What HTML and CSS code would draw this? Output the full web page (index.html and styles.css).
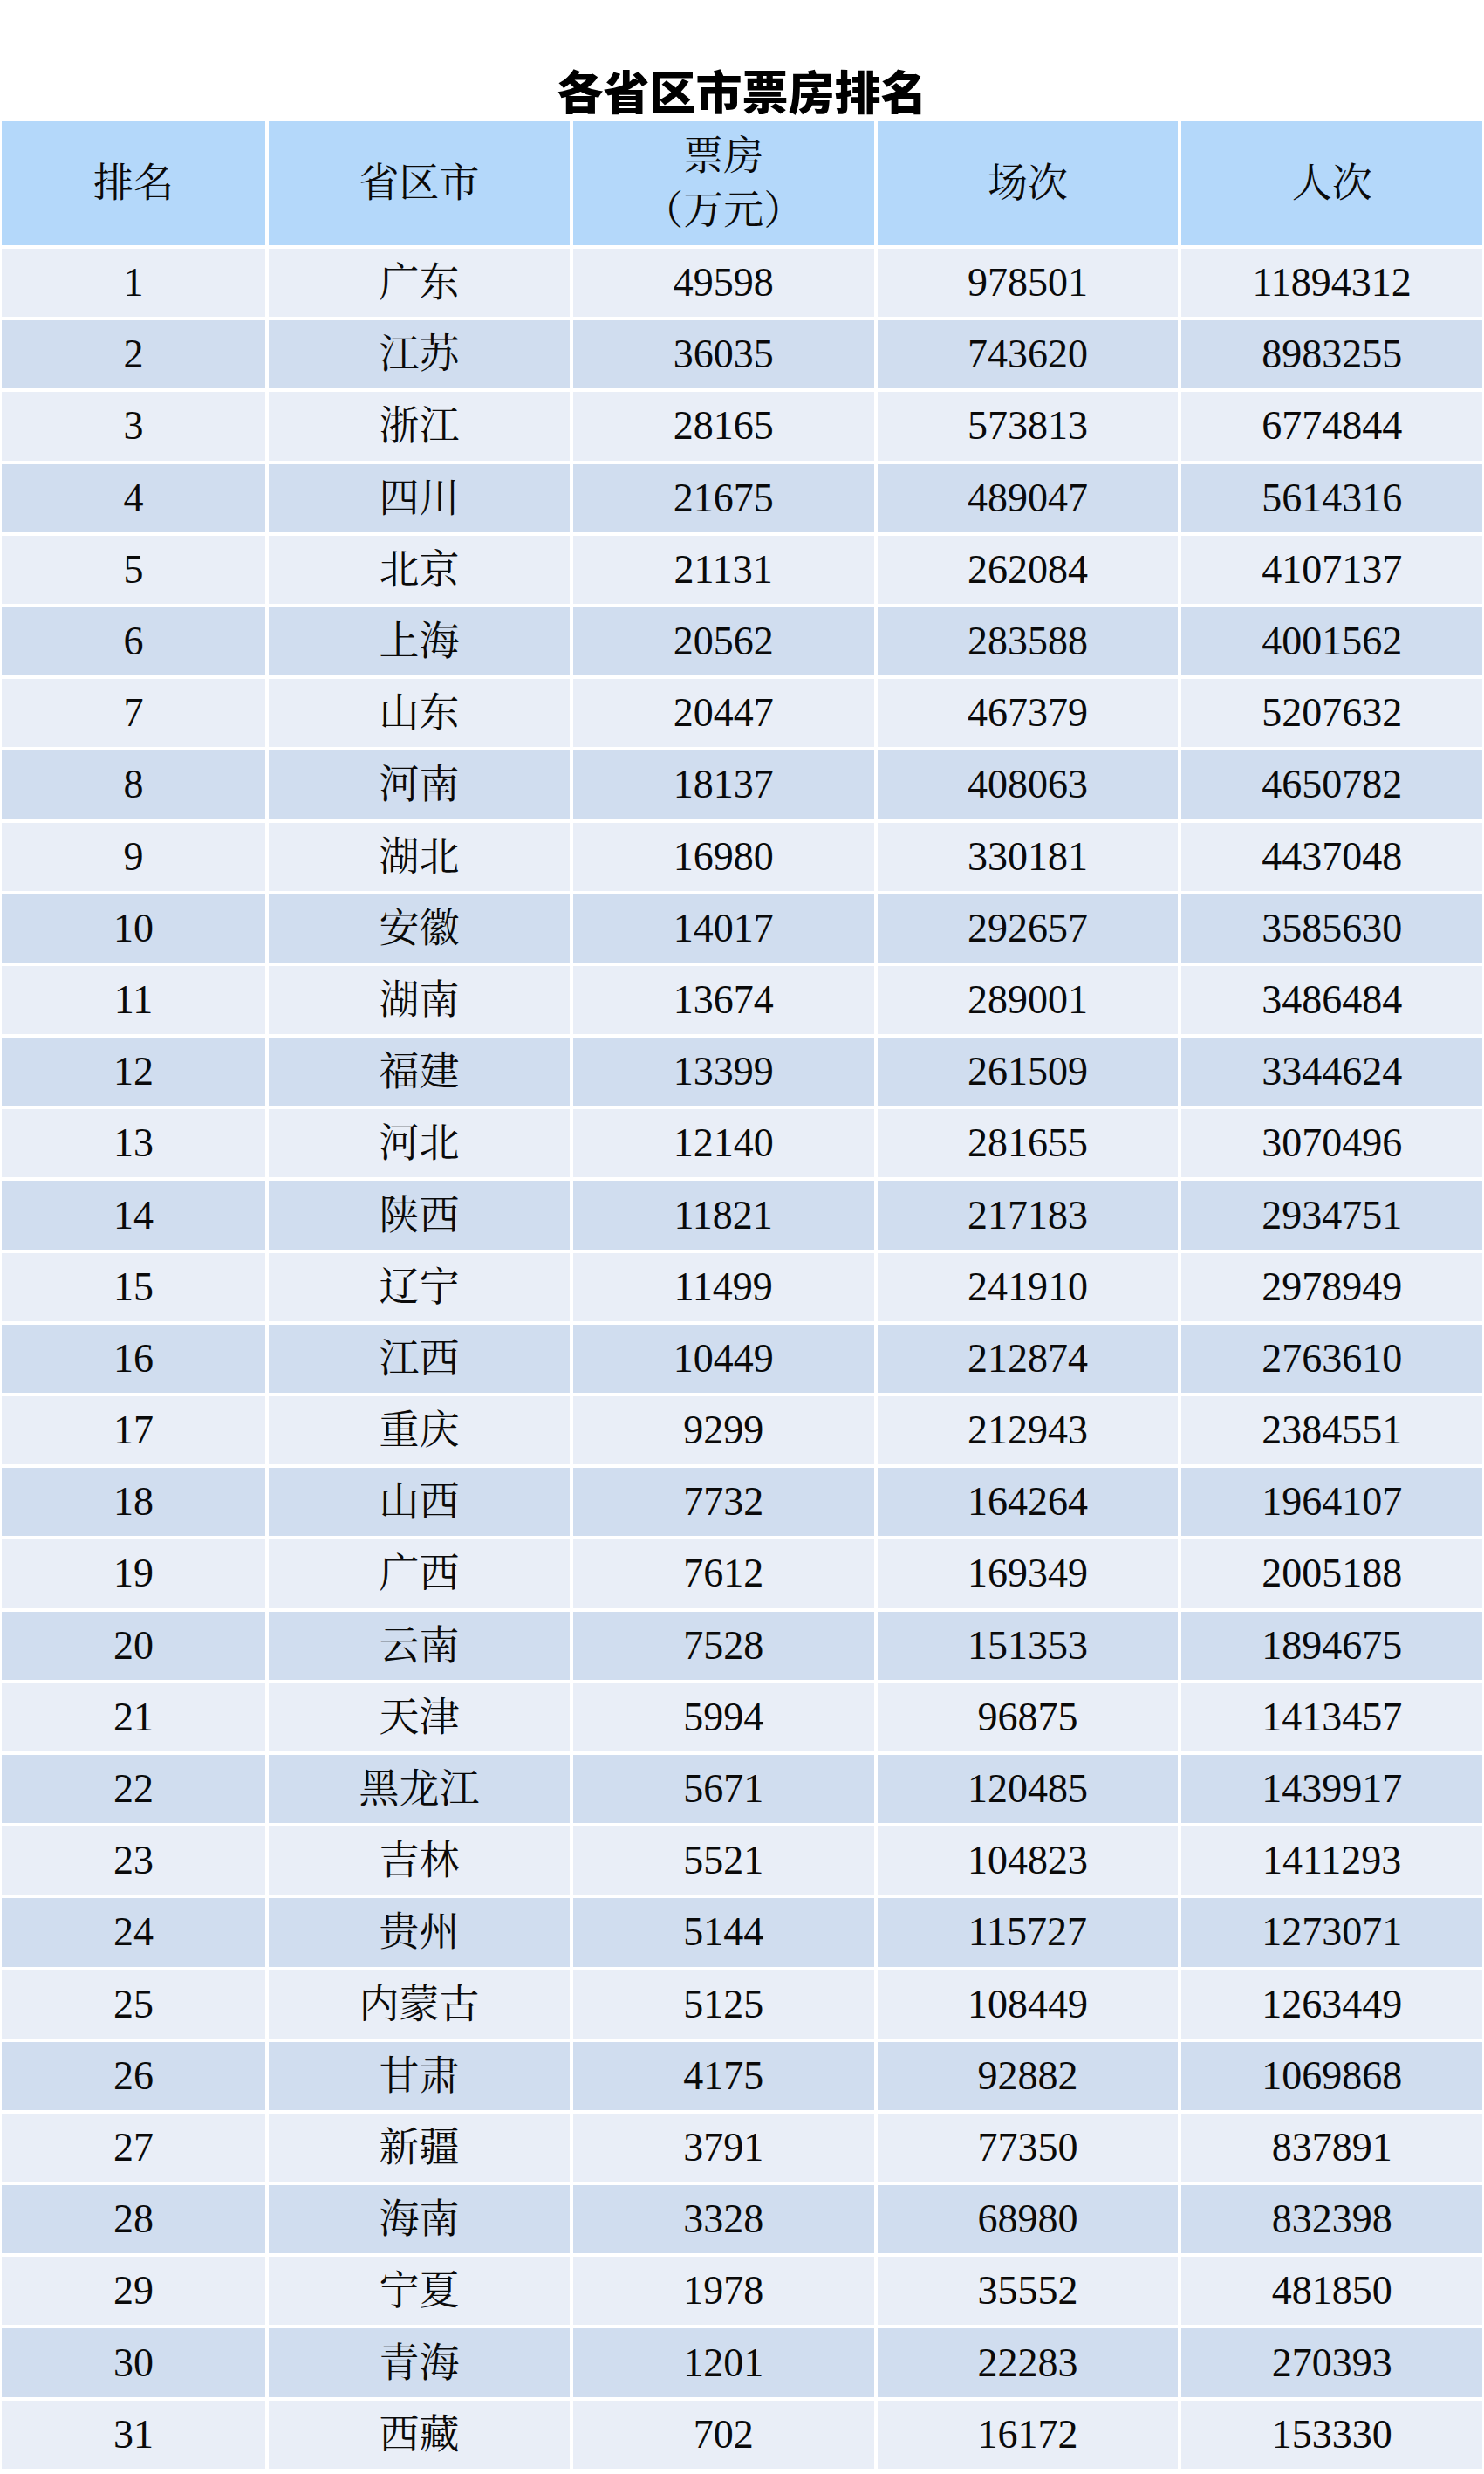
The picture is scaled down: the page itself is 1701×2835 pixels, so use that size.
FILE: index.html
```html
<!DOCTYPE html>
<html lang="zh-CN">
<head>
<meta charset="utf-8">
<title>各省区市票房排名</title>
<link rel="stylesheet" href="styles.css">
</head>
<body>
<div class="page">
  <h1 class="title">各省区市票房排名</h1>
  <div class="table">
    <div class="th">排名</div>
    <div class="th">省区市</div>
    <div class="th two">票房<br>（万元）</div>
    <div class="th">场次</div>
    <div class="th">人次</div>

    <div class="td odd">1</div><div class="td odd">广东</div><div class="td odd">49598</div><div class="td odd">978501</div><div class="td odd">11894312</div>
    <div class="td even">2</div><div class="td even">江苏</div><div class="td even">36035</div><div class="td even">743620</div><div class="td even">8983255</div>
    <div class="td odd">3</div><div class="td odd">浙江</div><div class="td odd">28165</div><div class="td odd">573813</div><div class="td odd">6774844</div>
    <div class="td even">4</div><div class="td even">四川</div><div class="td even">21675</div><div class="td even">489047</div><div class="td even">5614316</div>
    <div class="td odd">5</div><div class="td odd">北京</div><div class="td odd">21131</div><div class="td odd">262084</div><div class="td odd">4107137</div>
    <div class="td even">6</div><div class="td even">上海</div><div class="td even">20562</div><div class="td even">283588</div><div class="td even">4001562</div>
    <div class="td odd">7</div><div class="td odd">山东</div><div class="td odd">20447</div><div class="td odd">467379</div><div class="td odd">5207632</div>
    <div class="td even">8</div><div class="td even">河南</div><div class="td even">18137</div><div class="td even">408063</div><div class="td even">4650782</div>
    <div class="td odd">9</div><div class="td odd">湖北</div><div class="td odd">16980</div><div class="td odd">330181</div><div class="td odd">4437048</div>
    <div class="td even">10</div><div class="td even">安徽</div><div class="td even">14017</div><div class="td even">292657</div><div class="td even">3585630</div>
    <div class="td odd">11</div><div class="td odd">湖南</div><div class="td odd">13674</div><div class="td odd">289001</div><div class="td odd">3486484</div>
    <div class="td even">12</div><div class="td even">福建</div><div class="td even">13399</div><div class="td even">261509</div><div class="td even">3344624</div>
    <div class="td odd">13</div><div class="td odd">河北</div><div class="td odd">12140</div><div class="td odd">281655</div><div class="td odd">3070496</div>
    <div class="td even">14</div><div class="td even">陕西</div><div class="td even">11821</div><div class="td even">217183</div><div class="td even">2934751</div>
    <div class="td odd">15</div><div class="td odd">辽宁</div><div class="td odd">11499</div><div class="td odd">241910</div><div class="td odd">2978949</div>
    <div class="td even">16</div><div class="td even">江西</div><div class="td even">10449</div><div class="td even">212874</div><div class="td even">2763610</div>
    <div class="td odd">17</div><div class="td odd">重庆</div><div class="td odd">9299</div><div class="td odd">212943</div><div class="td odd">2384551</div>
    <div class="td even">18</div><div class="td even">山西</div><div class="td even">7732</div><div class="td even">164264</div><div class="td even">1964107</div>
    <div class="td odd">19</div><div class="td odd">广西</div><div class="td odd">7612</div><div class="td odd">169349</div><div class="td odd">2005188</div>
    <div class="td even">20</div><div class="td even">云南</div><div class="td even">7528</div><div class="td even">151353</div><div class="td even">1894675</div>
    <div class="td odd">21</div><div class="td odd">天津</div><div class="td odd">5994</div><div class="td odd">96875</div><div class="td odd">1413457</div>
    <div class="td even">22</div><div class="td even">黑龙江</div><div class="td even">5671</div><div class="td even">120485</div><div class="td even">1439917</div>
    <div class="td odd">23</div><div class="td odd">吉林</div><div class="td odd">5521</div><div class="td odd">104823</div><div class="td odd">1411293</div>
    <div class="td even">24</div><div class="td even">贵州</div><div class="td even">5144</div><div class="td even">115727</div><div class="td even">1273071</div>
    <div class="td odd">25</div><div class="td odd">内蒙古</div><div class="td odd">5125</div><div class="td odd">108449</div><div class="td odd">1263449</div>
    <div class="td even">26</div><div class="td even">甘肃</div><div class="td even">4175</div><div class="td even">92882</div><div class="td even">1069868</div>
    <div class="td odd">27</div><div class="td odd">新疆</div><div class="td odd">3791</div><div class="td odd">77350</div><div class="td odd">837891</div>
    <div class="td even">28</div><div class="td even">海南</div><div class="td even">3328</div><div class="td even">68980</div><div class="td even">832398</div>
    <div class="td odd">29</div><div class="td odd">宁夏</div><div class="td odd">1978</div><div class="td odd">35552</div><div class="td odd">481850</div>
    <div class="td even">30</div><div class="td even">青海</div><div class="td even">1201</div><div class="td even">22283</div><div class="td even">270393</div>
    <div class="td odd">31</div><div class="td odd">西藏</div><div class="td odd">702</div><div class="td odd">16172</div><div class="td odd">153330</div>
  </div>
</div>
</body>
</html>
```
FILE: styles.css
```css
html, body {
  margin: 0;
  padding: 0;
  background: #ffffff;
}

.page {
  width: 1701px;
  padding: 0 2px;
  box-sizing: border-box;
}

.title {
  margin: 0;
  height: 139px;
  padding-top: 77px;
  box-sizing: border-box;
  font-family: "Noto Sans CJK SC", sans-serif;
  font-weight: 900;
  font-size: 53px;
  line-height: 52px;
  text-align: center;
  color: #000000;
}

.table {
  display: grid;
  grid-template-columns: 302px repeat(4, 1fr);
  grid-template-rows: 142px;
  grid-auto-rows: 78.2px;
  gap: 4px;
  width: 1697px;
}

.th,
.td {
  display: flex;
  align-items: center;
  justify-content: center;
  text-align: center;
  font-family: "Liberation Serif", "Noto Serif CJK SC", "Noto Sans CJK SC", serif;
  font-weight: 400;
  font-size: 46px;
  color: #0a0a0a;
}

.th {
  background: #b4d8fa;
  line-height: 62px;
}

.td {
  line-height: 1;
}

.odd {
  background: #e9eef7;
}

.even {
  background: #d0ddef;
}
```
